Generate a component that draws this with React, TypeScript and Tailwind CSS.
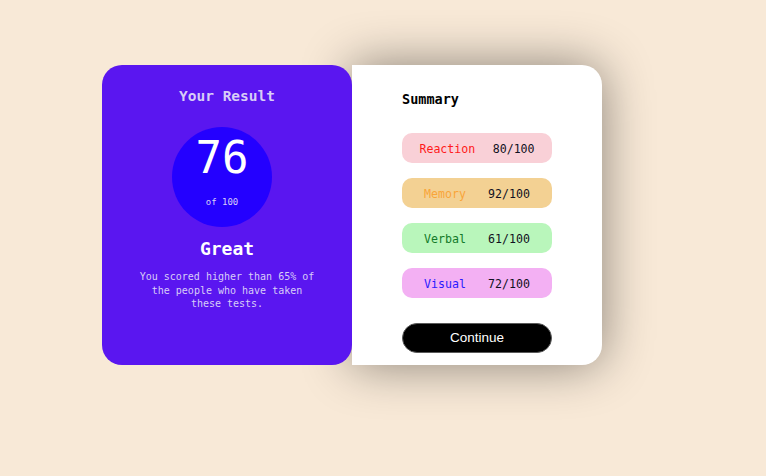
import React from "react";

const mono = { fontFamily: '"DejaVu Sans Mono", "Liberation Mono", monospace' };

const items = [
  { label: "Reaction", score: "80/100", bg: "bg-[#f9d0d7]", fg: "text-[#ff1a1a]" },
  { label: "Memory", score: "92/100", bg: "bg-[#f3d193]", fg: "text-[#f9a53a]" },
  { label: "Verbal", score: "61/100", bg: "bg-[#b9f6bb]", fg: "text-[#137a2a]" },
  { label: "Visual", score: "72/100", bg: "bg-[#f3b0f3]", fg: "text-[#2a1aff]" },
];

export default function App() {
  return (
    <div className="min-h-screen w-full bg-[#f8e9d7] pl-[102px] pt-[65px]" style={mono}>
      <div className="flex">
        <div className="relative z-10 flex h-[300px] w-[250px] flex-col items-center rounded-[20px] bg-[#5a16f0] pt-[21px]">
          <h1 className="text-[14.5px] font-bold leading-[20px] text-[#d8cdf7]">Your Result</h1>
          <div className="mr-[10px] mt-[21px] flex h-[100px] w-[100px] flex-col items-center rounded-full bg-[#2400ff] pt-[9px]">
            <div className="text-[44px] leading-[44px] text-white">76</div>
            <div className="mt-[16px] text-[9px] leading-[12px] text-[#d8cdf7]">of 100</div>
          </div>
          <div className="mt-[10px] text-[18px] font-bold leading-[24px] text-white">Great</div>
          <p className="mt-[9px] w-[185px] text-center text-[10px] leading-[13.5px] text-[#d8cdf7]">
            You scored higher than 65% of the people who have taken these tests.
          </p>
        </div>
        <div className="flex h-[300px] w-[250px] flex-col rounded-r-[20px] bg-white pl-[50px] pt-[24px] shadow-[0_0_50px_rgba(0,0,0,0.45)]">
          <h2 className="text-[13.5px] font-bold leading-[20px] text-black">Summary</h2>
          <div className="mt-[24px] flex flex-col gap-[15px]">
            {items.map((it) => (
              <div
                key={it.label}
                className={`flex h-[30px] w-[150px] items-center justify-evenly rounded-[10px] pt-[3px] text-[11.6px] ${it.bg}`}
              >
                <span className={it.fg}>{it.label}</span>
                <span className="text-[#111122]">{it.score}</span>
              </div>
            ))}
          </div>
          <button
            className="mt-[25px] flex h-[30px] w-[150px] items-center justify-center rounded-full border-[1.5px] border-[#5a5a5a] bg-black pt-[1px] text-[13.5px] font-medium text-white"
            style={{ fontFamily: '"Liberation Sans", Arial, sans-serif' }}
          >
            Continue
          </button>
        </div>
      </div>
    </div>
  );
}
